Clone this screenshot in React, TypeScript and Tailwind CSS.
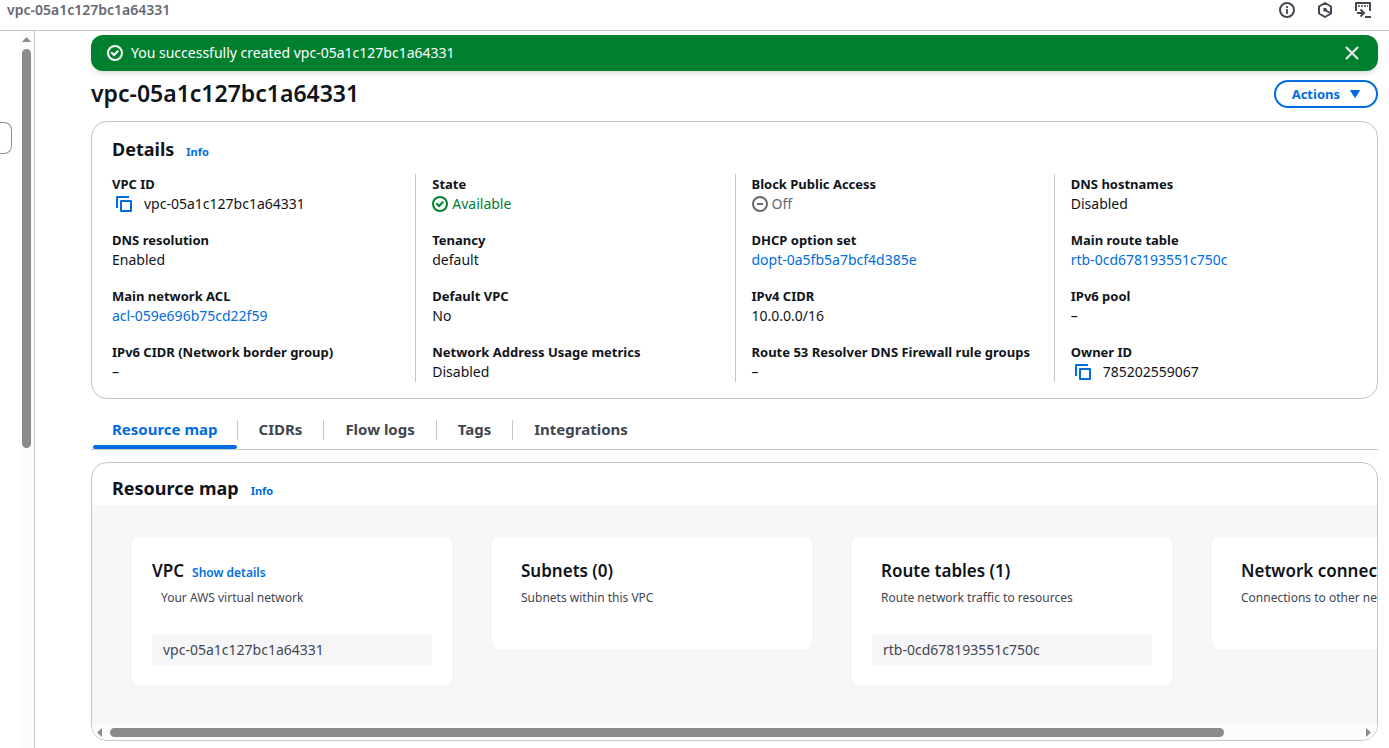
import type { ReactNode } from "react";

function CheckCircle() {
  return (
    <svg viewBox="0 0 16 16" className="size-4 shrink-0" fill="none" stroke="currentColor" strokeWidth="2" aria-hidden="true">
      <circle cx="8" cy="8" r="7" />
      <path d="m5 8 2 2 3.5-3.5" strokeLinecap="square" />
    </svg>
  );
}

function MinusCircle() {
  return (
    <svg viewBox="0 0 16 16" className="size-4 shrink-0" fill="none" stroke="currentColor" strokeWidth="2" aria-hidden="true">
      <circle cx="8" cy="8" r="7" />
      <path d="M5 8h6" />
    </svg>
  );
}

function CopyIcon() {
  return (
    <svg viewBox="0 0 16 16" className="size-4" fill="none" stroke="currentColor" strokeWidth="2" strokeLinejoin="round" aria-hidden="true">
      <path d="M5 5h10v10H5z" />
      <path d="M13 1H1v11" />
    </svg>
  );
}

function CopyValue({ label, children }: { label: string; children: string }) {
  return (
    <span className="flex items-center gap-3 pl-1">
      <button type="button" aria-label={label} className="text-[#006ce0]">
        <CopyIcon />
      </button>
      {children}
    </span>
  );
}

function ValueLink({ children }: { children: string }) {
  return (
    <a href="#" className="text-[#006ce0]">
      {children}
    </a>
  );
}

type Field = { label: string; value: ReactNode };

const columns: Field[][] = [
  [
    { label: "VPC ID", value: <CopyValue label="Copy VPC ID">vpc-05a1c127bc1a64331</CopyValue> },
    { label: "DNS resolution", value: "Enabled" },
    { label: "Main network ACL", value: <ValueLink>acl-059e696b75cd22f59</ValueLink> },
    { label: "IPv6 CIDR (Network border group)", value: "–" },
  ],
  [
    {
      label: "State",
      value: (
        <span className="flex items-center gap-1 text-[#00802f]">
          <CheckCircle />
          Available
        </span>
      ),
    },
    { label: "Tenancy", value: "default" },
    { label: "Default VPC", value: "No" },
    { label: "Network Address Usage metrics", value: "Disabled" },
  ],
  [
    {
      label: "Block Public Access",
      value: (
        <span className="flex items-center gap-1 text-[#656871]">
          <MinusCircle />
          Off
        </span>
      ),
    },
    { label: "DHCP option set", value: <ValueLink>dopt-0a5fb5a7bcf4d385e</ValueLink> },
    { label: "IPv4 CIDR", value: "10.0.0.0/16" },
    { label: "Route 53 Resolver DNS Firewall rule groups", value: "–" },
  ],
  [
    { label: "DNS hostnames", value: "Disabled" },
    { label: "Main route table", value: <ValueLink>rtb-0cd678193551c750c</ValueLink> },
    { label: "IPv6 pool", value: "–" },
    { label: "Owner ID", value: <CopyValue label="Copy owner ID">785202559067</CopyValue> },
  ],
];

const tabs = ["Resource map", "CIDRs", "Flow logs", "Tags", "Integrations"];

type MapCard = { title: string; text: string; action?: string; item?: string };

const mapCards: MapCard[] = [
  { title: "VPC", text: "Your AWS virtual network", action: "Show details", item: "vpc-05a1c127bc1a64331" },
  { title: "Subnets (0)", text: "Subnets within this VPC" },
  { title: "Route tables (1)", text: "Route network traffic to resources", item: "rtb-0cd678193551c750c" },
  { title: "Network connections (0)", text: "Connections to other networks" },
];

function TopBar() {
  return (
    <header className="flex h-[31px] items-start justify-between border-b border-[#c6c6cd] pr-[18px] pl-[7px]">
      <span className="text-sm leading-5 font-semibold text-[#656871]">vpc-05a1c127bc1a64331</span>
      <div className="flex gap-[22px] pt-[2px] text-[#424650]">
        <button type="button" aria-label="Info">
          <svg viewBox="0 0 16 16" className="size-4" fill="none" stroke="currentColor" strokeWidth="2">
            <circle cx="8" cy="8" r="7" />
            <path d="M8 7v5M8 4v2" strokeWidth="1.8" />
          </svg>
        </button>
        <button type="button" aria-label="Amazon Q">
          <svg viewBox="0 0 16 16" className="size-4" fill="none" stroke="currentColor" strokeWidth="2" strokeLinejoin="round">
            <path d="M8 1l6 3.500v7L8 15l-6-3.500v-7z" />
            <path d="M8 8l5 3" />
            <circle cx="8" cy="7.700" r="1.900" fill="currentColor" stroke="none" />
          </svg>
        </button>
        <button type="button" aria-label="CloudShell">
          <svg viewBox="0 0 16 16" className="size-4" fill="none" stroke="currentColor" strokeWidth="2">
            <path d="M1 9V1h14v8" strokeLinejoin="round" />
            <path d="M3 4h2M6 4h2M9 4h2M12 4h1" strokeWidth="1.500" />
            <path d="M2 11h7M5.500 7.500L9 11l-3.500 3.500" strokeWidth="1.800" />
            <path d="M10 15h6" />
          </svg>
        </button>
      </div>
    </header>
  );
}

function SideRail() {
  return (
    <aside className="flex w-[35px] shrink-0 justify-between border-r border-[#c6c6cd]">
      <div className="mt-[91px] h-8 w-3 rounded-r-lg border border-l-0 border-[#8c8c94]" />
      <div className="flex w-[15px] flex-col items-center bg-[#fcfcfc] pt-[6px]">
        <svg viewBox="0 0 9 5" className="h-[5px] w-[9px]" fill="#8b8b8b" aria-hidden="true">
          <path d="M4.500 0L9 5H0z" />
        </svg>
        <div className="mt-[7px] h-[399px] w-[9px] rounded-full bg-[#8b8b8b]" />
      </div>
    </aside>
  );
}

function Banner() {
  return (
    <div role="status" className="flex h-9 items-center gap-2 rounded-xl bg-[#00802f] px-4 text-white shadow-md">
      <CheckCircle />
      <span className="flex-1 text-sm">You successfully created vpc-05a1c127bc1a64331</span>
      <button type="button" aria-label="Dismiss" className="mr-[2px]">
        <svg viewBox="0 0 16 16" className="size-4" fill="none" stroke="#ebebf0" strokeWidth="2" strokeLinecap="round">
          <path d="M2.500 2.500l11 11M13.500 2.500l-11 11" />
        </svg>
      </button>
    </div>
  );
}

function Details() {
  return (
    <section className="mt-[13px] rounded-2xl border border-[#c6c6cd] px-5 pb-4">
      <div className="flex items-baseline gap-3 pt-[13px] pb-[11px]">
        <h2 className="text-lg leading-7 font-bold">Details</h2>
        <a href="#" className="text-[11px] font-bold text-[#006ce0]">Info</a>
      </div>
      <div className="-mx-4 grid grid-cols-4">
        {columns.map((fields, i) => (
          <dl key={i} className="flex flex-col gap-4 border-l border-[#c6c6cd] pl-4 first:border-transparent first:pl-[15px]">
            {fields.map((f) => (
              <div key={f.label}>
                <dt className="font-bold whitespace-nowrap">{f.label}</dt>
                <dd className="text-sm leading-5">{f.value}</dd>
              </div>
            ))}
          </dl>
        ))}
      </div>
    </section>
  );
}

function Tabs() {
  return (
    <div role="tablist" className="mt-4 flex h-[35px] border-b border-[#c6c6cd] pl-[2px]">
      {tabs.map((tab, i) => (
        <div key={tab} className="group flex">
          <button
            type="button"
            role="tab"
            aria-selected={i === 0}
            className="flex flex-col justify-between pt-1 text-[15px] leading-5 font-bold text-[#424650] aria-selected:text-[#006ce0]"
          >
            <span className="px-[21px] group-first:px-[19px]">{tab}</span>
            <span className="hidden h-1 w-full rounded-sm bg-[#006ce0] group-first:block" />
          </button>
          <span className="mt-[5px] h-5 w-px bg-[#c6c6cd] group-last:hidden" />
        </div>
      ))}
    </div>
  );
}

function ResourceMap() {
  return (
    <section className="mt-3 overflow-hidden rounded-2xl border border-[#c6c6cd]">
      <div className="flex items-baseline gap-3 px-5 pt-[11px] pb-[3px]">
        <h2 className="text-lg leading-7 font-bold">Resource map</h2>
        <a href="#" className="text-[11px] font-bold text-[#006ce0]">Info</a>
      </div>
      <div className="flex items-start gap-10 overflow-hidden bg-[#f6f6f9] px-10 pt-8 pb-10">
        {mapCards.map((card) => (
          <article key={card.title} className="min-h-28 w-80 shrink-0 rounded-lg bg-white p-5">
            <div className={card.action ? "flex items-baseline gap-2" : "pl-[9px]"}>
              <h3 className="text-[17px] leading-7 font-semibold whitespace-nowrap">{card.title}</h3>
              {card.action && (
                <button type="button" className="text-xs font-semibold text-[#006ce0]">{card.action}</button>
              )}
            </div>
            <p className="mt-[5px] pl-[9px] text-xs leading-4 text-[#424650]">{card.text}</p>
            {card.item && (
              <div className="mt-[29px] rounded-xs bg-[#f6f6f9] px-[11px] py-[5px] text-sm leading-5 text-[#424650]">{card.item}</div>
            )}
          </article>
        ))}
      </div>
      <div className="flex h-[15px] items-center bg-[#fcfcfc] px-[5px]">
        <svg viewBox="0 0 5 9" className="h-[9px] w-[5px]" fill="#8b8b8b" aria-hidden="true">
          <path d="M0 4.500L5 0v9z" />
        </svg>
        <div className="mr-1 ml-2 flex-1">
          <div className="h-[9px] w-[89%] rounded-full bg-[#8b8b8b]" />
        </div>
        <svg viewBox="0 0 5 9" className="mr-px h-[9px] w-[5px]" fill="#8b8b8b" aria-hidden="true">
          <path d="M5 4.500L0 0v9z" />
        </svg>
      </div>
    </section>
  );
}

export default function App() {
  return (
    <div className="flex min-h-screen flex-col bg-white font-['Noto_Sans',sans-serif] text-[13px] leading-5 text-[#0f141a]">
      <TopBar />
      <div className="flex flex-1">
        <SideRail />
        <main className="min-w-0 flex-1 pt-1 pr-[11px] pl-14">
          <Banner />
          <div className="mt-2 flex items-start justify-between">
            <h1 className="text-[23px] leading-7 font-semibold">vpc-05a1c127bc1a64331</h1>
            <button
              type="button"
              className="mt-px flex h-7 items-center gap-[10px] rounded-full border-2 border-[#006ce0] px-4 font-bold text-[#006ce0]"
            >
              Actions
              <svg viewBox="0 0 10 8" className="h-2 w-[10px]" fill="currentColor" stroke="currentColor" strokeLinejoin="round" aria-hidden="true">
                <path d="M.5.500h9L5 7.500z" />
              </svg>
            </button>
          </div>
          <Details />
          <Tabs />
          <ResourceMap />
        </main>
      </div>
    </div>
  );
}
